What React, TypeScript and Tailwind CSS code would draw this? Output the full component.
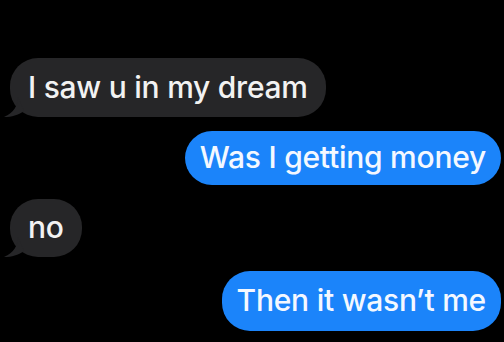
import React from "react"

function Tail() {
    return (
        <svg className="absolute -left-[6px] bottom-0" width="20" height="20" viewBox="0 0 20 20">
            <path d="M14 0 C14 8 10 16 0 20 C8 20 14 18 20 14 Z" fill="#262628" />
        </svg>
    )
}

function Bubble({ text, me, h }: { text: string; me?: boolean; h: string }) {
    return (
        <div className={`flex ${me ? "justify-end pr-[3px]" : "justify-start pl-[10px]"}`}>
            <div
                className={`relative flex items-center rounded-[28px] text-[30px] font-medium leading-none tracking-[-0.25px] ${h} ${
                    me ? "bg-[#1b84fa] text-[#f4f8ff] px-[15px]" : "bg-[#262628] text-[#f2f2f2] px-[18px]"
                }`}
            >
                {!me && <Tail />}
                <span className="relative -mt-[2px]">{text}</span>
            </div>
        </div>
    )
}

export default function App() {
    return (
        <div
            className="w-[504px] h-[342px] bg-black overflow-hidden flex flex-col gap-[14px] pt-[58px]"
            style={{ fontFamily: "Inter, 'Noto Sans', sans-serif" }}
        >
            <Bubble text="I saw u in my dream" h="h-[59px]" />
            <Bubble text="Was I getting money" me h="h-[54px]" />
            <Bubble text="no" h="h-[58px]" />
            <Bubble text="Then it wasn’t me" me h="h-[60px]" />
        </div>
    )
}
